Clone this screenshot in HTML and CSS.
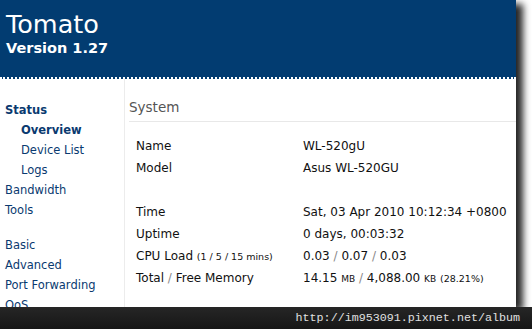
FILE: index.html
```html
<!DOCTYPE html>
<html lang="en">
<head>
    <meta charset="UTF-8">
    <title>Tomato</title>
    <link rel="stylesheet" href="styles.css">
</head>
<body>
    <div class="frame">
        <div class="shot">
            <div class="header">
                <div class="title">Tomato</div>
                <div class="version">Version 1.27</div>
            </div>
            <div class="main">
                <ul class="nav">
                    <li class="bold">Status</li>
                    <li class="sub bold">Overview</li>
                    <li class="sub">Device List</li>
                    <li class="sub">Logs</li>
                    <li>Bandwidth</li>
                    <li>Tools</li>
                    <li class="gap">Basic</li>
                    <li>Advanced</li>
                    <li>Port Forwarding</li>
                    <li>QoS</li>
                </ul>
                <div class="content">
                    <div class="section-title">System</div>
                    <table class="info">
                        <tr><td class="label">Name</td><td>WL-520gU</td></tr>
                        <tr><td class="label">Model</td><td>Asus WL-520GU</td></tr>
                        <tr><td class="label">&nbsp;</td><td></td></tr>
                        <tr><td class="label">Time</td><td>Sat, 03 Apr 2010 10:12:34 +0800</td></tr>
                        <tr><td class="label">Uptime</td><td>0 days, 00:03:32</td></tr>
                        <tr><td class="label">CPU Load <small>(1 / 5 / 15 mins)</small></td><td>0.03 <span class="sep">/</span> 0.07 <span class="sep">/</span> 0.03</td></tr>
                        <tr><td class="label">Total <span class="sep">/</span> Free Memory</td><td>14.15 <small class="unit">MB</small> <span class="sep">/</span> 4,088.00 <small class="unit">KB</small> <small>(28.21%)</small></td></tr>
                    </table>
                </div>
            </div>
        </div>
        <div class="watermark">http://im953091.pixnet.net/album</div>
    </div>
</body>
</html>
```

FILE: styles.css
```css
body {
    margin: 0;
    background-color: #fff;
    font-family: 'DejaVu Sans', Verdana, sans-serif;
}
.frame {
    width: 532px;
    height: 329px;
    overflow: hidden;
}
.shot {
    width: 516px;
    height: 307px;
    overflow: hidden;
    background-color: #fff;
    box-shadow: 7px 4px 7px rgba(0,0,0,0.85);
}
.header {
    height: 77px;
    background-color: #023c71;
    border-bottom: 2px dotted #fff;
    color: #fff;
    padding-left: 6px;
    box-sizing: content-box;
}
.title {
    font-size: 25.5px;
    line-height: 26px;
    padding-top: 11px;
}
.version {
    font-size: 14.5px;
    font-weight: bold;
    line-height: 18px;
    padding-top: 2px;
}
.main {
    display: flex;
    height: 228px;
}
.nav {
    list-style: none;
    margin: 0;
    padding: 21px 0 0 5px;
    width: 119px;
    border-right: 1px solid #ececec;
    font-size: 11.5px;
    line-height: 20px;
    color: #0a3a70;
}
.nav li {
    white-space: nowrap;
}
.nav .sub {
    padding-left: 16px;
}
.nav .bold {
    font-weight: bold;
}
.nav .gap {
    margin-top: 15px;
}
.content {
    flex: 1;
    padding-left: 4px;
}
.section-title {
    margin-top: 18px;
    padding-bottom: 4px;
    font-size: 13.5px;
    line-height: 20px;
    color: #555;
    border-bottom: 1px solid #e8e8e8;
}
.info {
    margin-top: 13px;
    margin-left: 5px;
    border-collapse: collapse;
    font-size: 12px;
    color: #111;
}
.info td {
    padding: 0 2px;
    height: 22px;
    white-space: nowrap;
}
.info .label {
    width: 163px;
}
.info small {
    font-size: 9.5px;
}
.info .unit {
    font-size: 9px;
}
.sep {
    color: #8a8a8a;
}
.watermark {
    position: relative;
    height: 22px;
    background: linear-gradient(#262626, #161616);
    color: #e0e0e0;
    font-family: 'Liberation Mono', monospace;
    font-size: 11.7px;
    line-height: 22px;
    text-align: right;
    padding-right: 12px;
}
```
